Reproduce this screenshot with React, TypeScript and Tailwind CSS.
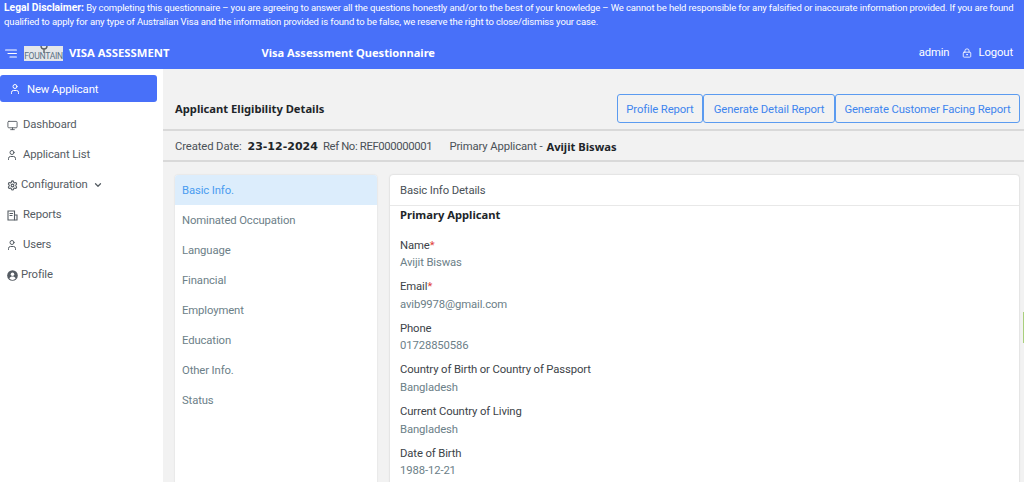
import React from "react";
import { ChevronDown, LockKeyhole, Monitor, Settings, User } from "lucide-react";

const bold = "font-['Noto_Sans',sans-serif] font-bold text-[11.2px] tracking-normal text-[#212529]";

const tabs = ["Basic Info.", "Nominated Occupation", "Language", "Financial", "Employment", "Education", "Other Info.", "Status"];

const fields = [
  { label: "Name", value: "Avijit Biswas", required: true },
  { label: "Email", value: "avib9978@gmail.com", required: true },
  { label: "Phone", value: "01728850586", required: false },
  { label: "Country of Birth or Country of Passport", value: "Bangladesh", required: false },
  { label: "Current Country of Living", value: "Bangladesh", required: false },
  { label: "Date of Birth", value: "1988-12-21", required: false },
];

const ReportIcon = () => (
  <svg width="11" height="11" viewBox="0 0 11 11" fill="none" stroke="currentColor" strokeWidth="1.1">
    <path d="M1 1h6.5v9H1z" />
    <path d="M7.5 5H10v5H7.5M2.5 3.5h3.5M2.5 5.5h3" />
  </svg>
);

const ProfileIcon = () => (
  <svg width="11" height="11" viewBox="0 0 12 12">
    <circle cx="6" cy="6" r="5.8" fill="currentColor" />
    <circle cx="6" cy="4.6" r="1.9" fill="white" />
    <path d="M2.6 9.4c.6-1.5 1.9-2.2 3.4-2.2s2.8.7 3.4 2.2C8.5 10.3 7.3 10.8 6 10.8s-2.5-.5-3.4-1.4z" fill="white" />
  </svg>
);

const SideItem = ({ icon, label, tight, chevron }: { icon: React.ReactNode; label: string; tight?: boolean; chevron?: boolean }) => (
  <div className="flex h-[30px] items-center pl-[6px] text-[#555c63]">
    <span className={`flex w-[12px] justify-center ${tight ? "mr-[3px]" : "mr-[5px]"}`}>{icon}</span>
    <span>{label}</span>
    {chevron && <ChevronDown size={10} strokeWidth={3} className="ml-[5px]" />}
  </div>
);

const App = () => {
  return (
    <div className="relative flex h-[482px] w-[1024px] flex-col overflow-hidden bg-[#f2f2f2] font-['Roboto',sans-serif] text-[11.3px] tracking-[-0.12px]">
      <div className="h-[69px] shrink-0 bg-[#4870f9] text-white">
        <p className="px-[4px] pt-px text-[9.5px] leading-[14px] tracking-[-0.13px]">
          <b className="text-[10.3px] tracking-normal">Legal Disclaimer:</b> By completing this questionnaire – you are agreeing to answer all the questions honestly and/or to the best of your knowledge – We cannot be held responsible for any falsified or inaccurate information provided. If you are found qualified to apply for any type of Australian Visa and the information provided is found to be false, we reserve the right to close/dismiss your case.
        </p>
        <div className="mt-[15px] flex h-[18px] items-center">
          <svg width="12" height="9" viewBox="0 0 12 9" className="ml-[5px]" stroke="white" strokeWidth="1.2" strokeLinecap="round">
            <path d="M.6 1h10.8M3 4.5h8.4M5 8h6.4" />
          </svg>
          <div className="ml-[7px] flex h-[15px] w-[39px] flex-col items-center overflow-hidden bg-[#e3e6ea] text-[#5b7183]">
            <svg width="10" height="7" viewBox="0 0 10 7" fill="none" stroke="#5a6066" strokeWidth="1.4" className="shrink-0">
              <path d="M2 0c0 2.5 1.5 3 3 3s3-.5 3-3M5 3v4" />
            </svg>
            <span className="mt-[-1px] text-[8.6px] leading-[9px] tracking-[-0.3px]">FOUNTAIN</span>
          </div>
          <span className="ml-[6px] font-['Noto_Sans',sans-serif] text-[11.3px] font-bold tracking-normal">VISA ASSESSMENT</span>
          <span className="ml-[92px] font-['Noto_Sans',sans-serif] text-[11.1px] font-bold tracking-normal">Visa Assessment Questionnaire</span>
          <span className="ml-auto">admin</span>
          <LockKeyhole size={10} className="ml-[13px]" />
          <span className="ml-[6px] mr-[11px]">Logout</span>
        </div>
      </div>

      <div className="flex min-h-0 flex-1">
        <aside className="w-[163px] shrink-0 bg-white">
          <div className="mt-[6px] flex h-[27px] w-[157px] items-center rounded-[3px] bg-[#4870f9] pl-[9px] text-white">
            <User size={12} className="mr-[6px]" />
            <span className="pt-[3px]">New Applicant</span>
          </div>
          <div className="mt-[8px]">
            <SideItem icon={<Monitor size={11} />} label="Dashboard" />
            <SideItem icon={<User size={12} />} label="Applicant List" />
            <SideItem icon={<Settings size={11} strokeWidth={2.4} />} label="Configuration" tight chevron />
            <SideItem icon={<ReportIcon />} label="Reports" />
            <SideItem icon={<User size={12} />} label="Users" />
            <SideItem icon={<ProfileIcon />} label="Profile" tight />
          </div>
        </aside>

        <main className="min-w-0 flex-1">
          <div className="flex h-[62px] items-end justify-between border-b-2 border-[#d9d9d9] pb-[6px] pl-[12px] pr-[4px]">
            <h1 className={`${bold} leading-[29px]`}>Applicant Eligibility Details</h1>
            <div className="flex text-[#3f85ee]">
              <span className="flex h-[29px] w-[86px] items-center justify-center rounded-[3px] border border-[#5b9bf0] pt-[3px]">Profile Report</span>
              <span className="flex h-[29px] w-[132px] items-center justify-center rounded-[3px] border border-[#5b9bf0] pt-[3px]">Generate Detail Report</span>
              <span className="flex h-[29px] w-[185px] items-center justify-center rounded-[3px] border border-[#5b9bf0] pt-[3px]">Generate Customer Facing Report</span>
            </div>
          </div>
          <div className="flex h-[31px] items-center border-b-2 border-[#d9d9d9] pl-[12px] pt-[3px] text-[#4a5157]">
            <span>Created Date:</span>
            <b className="ml-[6px] font-['DejaVu_Sans',sans-serif] text-[11px] tracking-normal text-[#212529]">23-12-2024</b>
            <span className="ml-[5px] tracking-[-0.35px]">Ref No: REF000000001</span>
            <span className="ml-[17px]">Primary Applicant -</span>
            <b className={`${bold} ml-[4px]`}>Avijit Biswas</b>
          </div>

          <div className="flex gap-[13px] pl-[12px] pt-[13px]">
            <nav className="h-[400px] w-[202px] shrink-0 overflow-hidden rounded-[3px] bg-white text-[#6c8088] shadow-[0_0_2px_rgba(0,0,0,0.12)]">
              {tabs.map((tab, i) => (
                <div key={tab} className={`flex h-[30px] items-center pl-[7px] pt-[2px] ${i === 0 ? "bg-[#dcedfc] text-[#4a9cf0]" : ""}`}>{tab}</div>
              ))}
            </nav>
            <section className="h-[400px] w-[629px] shrink-0 rounded-[3px] bg-white shadow-[0_0_2px_rgba(0,0,0,0.2)]">
              <div className="flex h-[31px] items-center border-b border-[#e8e8e8] pl-[10px] pt-[2px] text-[#4a5157]">Basic Info Details</div>
              <div className="pl-[10px]">
                <h2 className={`${bold} leading-[18px]`}>Primary Applicant</h2>
                <div className="mt-[12.7px] flex flex-col gap-[6.1px]">
                  {fields.map((f) => (
                    <div key={f.label}>
                      <div className="h-[17.5px] leading-[18px] text-[#3c4348]">
                        {f.label}
                        {f.required && <span className="text-[#e0403a]">*</span>}
                      </div>
                      <div className="h-[18px] leading-[18px] text-[#6c8088]">{f.value}</div>
                    </div>
                  ))}
                </div>
              </div>
            </section>
          </div>
        </main>
      </div>
      <div className="absolute right-0 top-[312px] h-[31px] w-px bg-[#a9cf7c]" />
    </div>
  );
};

export default App;
